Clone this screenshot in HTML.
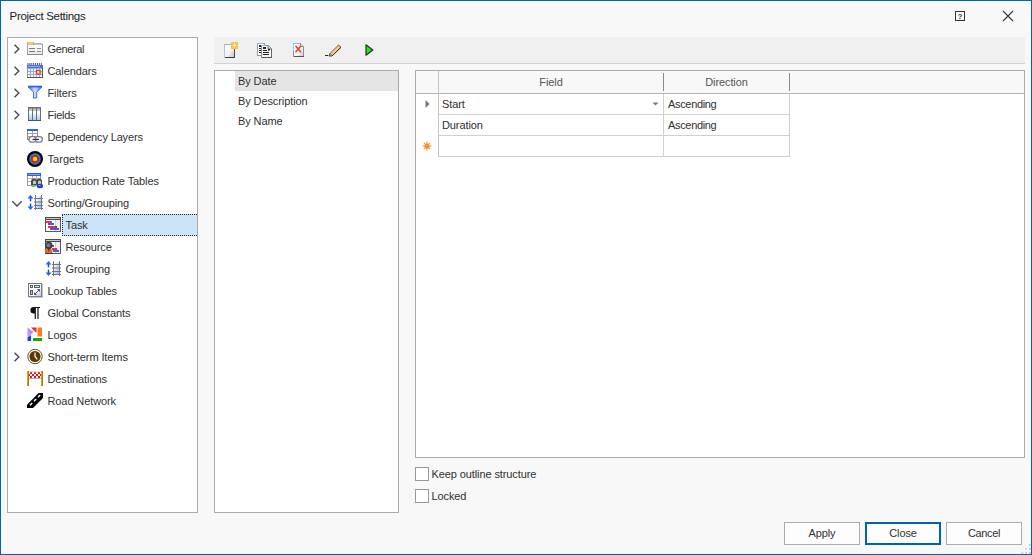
<!DOCTYPE html>
<html>
<head>
<meta charset="utf-8">
<title>Project Settings</title>
<style>
*{box-sizing:border-box;margin:0;padding:0}
html,body{width:1032px;height:555px;overflow:hidden;background:#f8f8f8}
body{font-family:"Liberation Sans",sans-serif;font-size:11px;letter-spacing:-0.1px;color:#303030;position:relative}
.win{position:absolute;left:0;top:0;width:1032px;height:555px;border:1px solid #0063b1;background:#f8f8f8}
.abs{position:absolute}
.title{position:absolute;left:9.600px;top:9px;font-size:11.500px;letter-spacing:-0.300px;line-height:14px;color:#222;white-space:nowrap}
.panel{position:absolute;background:#fff;border:1px solid #ababab}
.row{position:absolute;left:0;width:189px;height:22px;line-height:22px;white-space:nowrap}
.row .tx{position:absolute;top:0;color:#303030}
.row svg{position:absolute}
.sel{position:absolute;top:0;right:0;height:22px;background:#cce4f7;border:1px dotted #222;border-right:none}
.li{position:absolute;left:23px;line-height:20px;height:20px;color:#303030;white-space:nowrap}
.btn{position:absolute;top:522px;width:76px;height:23px;border:1px solid #adadad;background:#fdfdfd;text-align:center;line-height:21px;color:#303030}
.cb{position:absolute;width:14px;height:14px;border:1px solid #999;background:#fff}
.lbl{position:absolute;line-height:14px;color:#303030;white-space:nowrap}
.gl{position:absolute;background:#d0d0d0}
.gt{position:absolute;line-height:20px;color:#303030;white-space:nowrap}
</style>
</head>
<body>
<svg width="0" height="0" style="position:absolute"><defs><linearGradient id="gGen" x1="0" y1="0" x2="0" y2="1"><stop offset="0" stop-color="#ffffff"/><stop offset="1" stop-color="#e6e6e6"/></linearGradient><linearGradient id="gGenT" x1="0" y1="0" x2="0" y2="1"><stop offset="0" stop-color="#ffc04a"/><stop offset="1" stop-color="#ffe2a8"/></linearGradient><linearGradient id="gFil" x1="0" y1="0" x2="1" y2="0"><stop offset="0" stop-color="#3b6dff"/><stop offset="0.5" stop-color="#d6e2ff"/><stop offset="1" stop-color="#3b6dff"/></linearGradient><linearGradient id="gFld" x1="0" y1="0" x2="0" y2="1"><stop offset="0" stop-color="#ffffff"/><stop offset="0.400" stop-color="#fbfdff"/><stop offset="1" stop-color="#9cc8f5"/></linearGradient><linearGradient id="gSrt" x1="0" y1="0" x2="1" y2="1"><stop offset="0" stop-color="#ffffff"/><stop offset="1" stop-color="#8fc0f5"/></linearGradient><linearGradient id="gLk" x1="0" y1="0" x2="1" y2="1"><stop offset="0" stop-color="#ffffff"/><stop offset="0.6" stop-color="#f4f6fb"/><stop offset="1" stop-color="#a9c3f0"/></linearGradient><pattern id="pChk" x="2" y="1" width="4" height="4" patternUnits="userSpaceOnUse"><rect width="4" height="4" fill="#fff"/><rect x="1" width="2" height="2" fill="#ee1122"/><rect x="3" y="2" width="1" height="2" fill="#ee1122"/><rect x="0" y="2" width="1" height="2" fill="#ee1122"/></pattern><linearGradient id="gPg" x1="0" y1="0" x2="1" y2="1"><stop offset="0" stop-color="#ffffff"/><stop offset="0.55" stop-color="#f4f4f8"/><stop offset="1" stop-color="#b4b8c8"/></linearGradient><linearGradient id="gPd" x1="0" y1="0" x2="1" y2="1"><stop offset="0" stop-color="#ffffff"/><stop offset="0.600" stop-color="#f6f6f6"/><stop offset="1" stop-color="#c4c4c4"/></linearGradient></defs></svg>
<div class="win"></div>
<div class="title">Project Settings</div>

<!-- title buttons -->
<svg class="abs" style="left:955px;top:11px" width="10" height="10" viewBox="0 0 10 10"><rect x="0.5" y="0.5" width="9" height="9" fill="none" stroke="#333" stroke-width="1"/><text x="5" y="7.800" font-size="7.500" font-weight="bold" text-anchor="middle" font-family="Liberation Sans, sans-serif" fill="#333">?</text></svg>
<svg class="abs" style="left:1002px;top:10px" width="12" height="12" viewBox="0 0 12 12"><path d="M1 1L11 11M11 1L1 11" stroke="#333" stroke-width="1.100" fill="none"/></svg>

<!-- tree panel -->
<div class="panel" id="tree" style="left:7px;top:37px;width:191px;height:476px">
<div class="row" style="top:0px"><svg style="left:5px;top:5px" width="8" height="12" viewBox="0 0 8 12"><path d="M1.500 1.700L5.900 6L1.500 10.300" fill="none" stroke="#444" stroke-width="1.300"/></svg><svg style="left:19px;top:3px" width="16" height="16" viewBox="0 0 16 16"><rect x="0.5" y="3.5" width="15" height="10" fill="url(#gGen)" stroke="#a2a2a2"/><path d="M0.5 3.5V1.5H6.5V3.5" fill="url(#gGenT)" stroke="#c9a060" stroke-width="1"/><rect x="1" y="1" width="5" height="1.6" fill="#ffc45c"/><path d="M7.5 3.5V2.5H14.5V3.5" fill="#f4f4f4" stroke="#b0b0b0"/><rect x="2" y="7" width="6" height="1" fill="#7a7a7a"/><rect x="10" y="7" width="4" height="1" fill="#8e8e8e"/><rect x="2" y="10" width="6" height="1" fill="#7a7a7a"/><rect x="10" y="10" width="4" height="1" fill="#8e8e8e"/><rect x="0" y="13" width="16" height="1" fill="#8c8c8c"/></svg><span class="tx" style="left:39.5px;letter-spacing:-0.35px">General</span></div>
<div class="row" style="top:22px"><svg style="left:5px;top:5px" width="8" height="12" viewBox="0 0 8 12"><path d="M1.500 1.700L5.900 6L1.500 10.300" fill="none" stroke="#444" stroke-width="1.300"/></svg><svg style="left:19px;top:3px" width="16" height="16" viewBox="0 0 16 16"><rect x="0.5" y="2.5" width="15" height="12" fill="#f4f4f4" stroke="#9a9a9a"/><path d="M0.5 1H15.5" stroke="#222" stroke-width="1.6" stroke-dasharray="1 0.9"/><rect x="0" y="2" width="16" height="3" fill="#4570f0"/><rect x="1" y="3" width="12" height="1" fill="#8aa8ff"/><g fill="#93aaf0"><rect x="1" y="5" width="14" height="1"/><rect x="1" y="8" width="14" height="1"/><rect x="1" y="11" width="14" height="1"/><rect x="3" y="5" width="1" height="9"/><rect x="6" y="5" width="1" height="9"/><rect x="9" y="5" width="1" height="9"/><rect x="12" y="5" width="1" height="9"/></g><rect x="9.5" y="7.500" width="3.6" height="3.6" fill="#fff" stroke="#e2451a" stroke-width="1.4"/><rect x="0" y="14" width="16" height="1" fill="#555"/><rect x="15" y="5" width="1" height="10" fill="#555"/><rect x="0" y="5" width="1" height="9" fill="#999"/></svg><span class="tx" style="left:39.5px">Calendars</span></div>
<div class="row" style="top:44px"><svg style="left:5px;top:5px" width="8" height="12" viewBox="0 0 8 12"><path d="M1.500 1.700L5.900 6L1.500 10.300" fill="none" stroke="#444" stroke-width="1.300"/></svg><svg style="left:19px;top:3px" width="16" height="16" viewBox="0 0 16 16"><path d="M1.200 2H14.800L9.700 7.200V13H6.500V7.200Z" fill="url(#gFil)" stroke="#1f4ff0" stroke-width="0.8" stroke-linejoin="round"/><rect x="1" y="0.700" width="14" height="1.2" fill="#2458f5"/></svg><span class="tx" style="left:39.5px">Filters</span></div>
<div class="row" style="top:66px"><svg style="left:5px;top:5px" width="8" height="12" viewBox="0 0 8 12"><path d="M1.500 1.700L5.900 6L1.500 10.300" fill="none" stroke="#444" stroke-width="1.300"/></svg><svg style="left:19px;top:3px" width="16" height="16" viewBox="0 0 16 16"><rect x="1.5" y="0.5" width="12" height="13" fill="url(#gFld)" stroke="#6e6e6e"/><rect x="2" y="1" width="11" height="3" fill="#c4c4c4"/><rect x="2" y="1" width="11" height="1" fill="#9a9a9a"/><rect x="5" y="1" width="1" height="13" fill="#6e6e6e"/><rect x="9" y="1" width="1" height="13" fill="#6e6e6e"/><rect x="1" y="13" width="13" height="1" fill="#555"/></svg><span class="tx" style="left:39.5px;letter-spacing:-0.25px">Fields</span></div>
<div class="row" style="top:88px"><svg style="left:19px;top:3px" width="16" height="16" viewBox="0 0 16 16"><rect x="0.5" y="0.5" width="10" height="10" fill="#fff" stroke="#8e8e8e"/><rect x="0" y="0" width="11" height="2" fill="#3560ee"/><g fill="#a4a4a4"><rect x="1" y="4" width="9" height="1"/><rect x="1" y="7" width="9" height="1"/><rect x="5" y="2" width="1" height="8"/></g><rect x="2" y="7.600" width="7" height="5.600" rx="2.600" fill="#ffffff" stroke="#7b7f86" stroke-width="1.300"/><rect x="8.300" y="7.600" width="7" height="5.600" rx="2.600" fill="#ffffff" stroke="#7b7f86" stroke-width="1.300"/><rect x="5.500" y="9.800" width="6.500" height="1.300" fill="#1d3b66"/></svg><span class="tx" style="left:39.5px;letter-spacing:-0.15px">Dependency Layers</span></div>
<div class="row" style="top:110px"><svg style="left:19px;top:3px" width="16" height="16" viewBox="0 0 16 16"><circle cx="8" cy="8" r="8" fill="#000"/><circle cx="8" cy="8" r="5.800" fill="#1f7fe8"/><circle cx="8" cy="8" r="4" fill="#ee1111"/><circle cx="8" cy="8" r="2.200" fill="#ffee00"/></svg><span class="tx" style="left:39.5px;letter-spacing:0.05px">Targets</span></div>
<div class="row" style="top:132px"><svg style="left:19px;top:3px" width="16" height="16" viewBox="0 0 16 16"><rect x="0.5" y="0.5" width="13" height="12" fill="#fff" stroke="#9a9a9a"/><rect x="0" y="0" width="14" height="3" fill="#2f5df0"/><rect x="1" y="1" width="12" height="1" fill="#7f9cf5"/><g fill="#b5b5b5"><rect x="1" y="5" width="12" height="1"/><rect x="1" y="8" width="12" height="1"/><rect x="5" y="3" width="1" height="9"/><rect x="9" y="3" width="1" height="9"/></g><path d="M4 12V8.500Q4 5.500 7 5.500Q9 5.500 9.500 7Q10 5.500 12 5.500Q15 5.500 15 8.500V12Z" fill="#4a4a4a"/><path d="M6 11V9Q6 7.500 7.500 7.500T9 9V11Z M11 11V9Q11 7.500 12.500 7.500T14 9V11Z" fill="#c9c9c9"/><path d="M4 14L6.500 11.500L9 14Z" fill="#55d055"/><ellipse cx="13" cy="13" rx="3.200" ry="2.300" fill="#1e3fe0"/><rect x="11.500" y="12" width="2" height="1" fill="#9ab0ff"/></svg><span class="tx" style="left:39.5px">Production Rate Tables</span></div>
<div class="row" style="top:154px"><svg style="left:3px;top:8px" width="12" height="8" viewBox="0 0 12 8"><path d="M1.300 1.300L6 6L10.700 1.300" fill="none" stroke="#444" stroke-width="1.300"/></svg><svg style="left:19px;top:3px" width="16" height="16" viewBox="0 0 16 16"><path d="M3.500 0L6.500 3.500H4.200V6.200H2.800V3.500H0.500Z" fill="#2a62ff"/><path d="M3.500 15L6.500 11.500H4.200V8.800H2.800V11.500H0.500Z" fill="#2a62ff"/><rect x="2.900" y="3.500" width="1.200" height="2.700" fill="#0b5c8a"/><rect x="2.900" y="8.800" width="1.200" height="2.700" fill="#0b5c8a"/><rect x="9" y="1" width="5" height="13" fill="url(#gSrt)"/><g fill="#757575"><rect x="8" y="0" width="1" height="15"/><rect x="14" y="0" width="1" height="15"/><rect x="7" y="3" width="9" height="1"/><rect x="7" y="6.500" width="9" height="1"/><rect x="7" y="10" width="9" height="1"/><rect x="7" y="13" width="9" height="1"/></g></svg><span class="tx" style="left:39.5px">Sorting/Grouping</span></div>
<div class="row" style="top:176px"><svg style="left:37px;top:3px" width="16" height="16" viewBox="0 0 16 16"><rect x="0.5" y="0.5" width="15" height="14" fill="#fff" stroke="#5a5a5a"/><rect x="0" y="0" width="16" height="3" fill="#4a4a4a"/><rect x="1" y="1" width="14" height="1" fill="#c8c8c8"/><rect x="10" y="3" width="1" height="11" fill="#cfcfcf"/><rect x="11" y="3" width="4" height="11" fill="#f0f0f0"/><rect x="1" y="4" width="6" height="2" fill="#ff2a2a"/><rect x="3" y="6" width="6" height="2" fill="#2f63ff"/><rect x="3" y="9" width="9" height="2" fill="#ff2a2a"/><rect x="10" y="9" width="2" height="2" fill="#a04000"/><rect x="5" y="11" width="9" height="2" fill="#2f63ff"/></svg><div class="sel" style="left:53.5px"></div><span class="tx" style="left:57.5px">Task</span></div>
<div class="row" style="top:198px"><svg style="left:37px;top:3px" width="16" height="16" viewBox="0 0 16 16"><rect x="0.5" y="0.5" width="15" height="14" fill="#fff" stroke="#5a5a5a"/><rect x="0" y="0" width="16" height="3" fill="#4a4a4a"/><rect x="1" y="1" width="14" height="1" fill="#c8c8c8"/><rect x="10" y="3" width="1" height="11" fill="#cfcfcf"/><rect x="11" y="3" width="4" height="11" fill="#f0f0f0"/><rect x="7" y="6" width="2" height="2" fill="#2f63ff"/><rect x="7" y="9" width="5" height="2" fill="#ff2a2a"/><rect x="8" y="11" width="6" height="2" fill="#2f63ff"/><circle cx="3.800" cy="6.500" r="3.700" fill="#3c3c3c"/><circle cx="3.500" cy="6.200" r="2" fill="#7d7d7d"/><path d="M0 15V12Q0 10 2 10H5.500Q7.500 10 7.500 12V15Z" fill="#e8662a"/><path d="M3 10L3.800 13L4.600 10Z" fill="#333"/><rect x="0" y="14" width="8" height="1" fill="#3c3c3c"/></svg><span class="tx" style="left:57.5px">Resource</span></div>
<div class="row" style="top:220px"><svg style="left:37px;top:3px" width="16" height="16" viewBox="0 0 16 16"><path d="M3.500 0L6.500 3.500H4.200V6.200H2.800V3.500H0.500Z" fill="#2a62ff"/><path d="M3.500 15L6.500 11.500H4.200V8.800H2.800V11.500H0.500Z" fill="#2a62ff"/><rect x="2.900" y="3.500" width="1.200" height="2.700" fill="#0b5c8a"/><rect x="2.900" y="8.800" width="1.200" height="2.700" fill="#0b5c8a"/><rect x="9" y="1" width="5" height="13" fill="url(#gSrt)"/><g fill="#757575"><rect x="8" y="0" width="1" height="15"/><rect x="14" y="0" width="1" height="15"/><rect x="7" y="3" width="9" height="1"/><rect x="7" y="6.500" width="9" height="1"/><rect x="7" y="10" width="9" height="1"/><rect x="7" y="13" width="9" height="1"/></g></svg><span class="tx" style="left:57.5px">Grouping</span></div>
<div class="row" style="top:242px"><svg style="left:19px;top:3px" width="16" height="16" viewBox="0 0 16 16"><rect x="1.5" y="0.5" width="13" height="13" fill="url(#gLk)" stroke="#7a7a7a"/><rect x="2" y="13.500" width="13.500" height="1" fill="#8a8a8a"/><rect x="14.500" y="1" width="1" height="13" fill="#8a8a8a"/><rect x="3.500" y="2.500" width="2" height="2" fill="#e8f0ff" stroke="#505050" stroke-width="0.900"/><rect x="7.500" y="2.500" width="5" height="2" fill="#cfe0ff" stroke="#505050" stroke-width="0.900"/><rect x="3.500" y="7.500" width="2" height="4" fill="#9ec0ff" stroke="#505050" stroke-width="0.900"/><path d="M7.500 11.500L12.500 6.500M10.500 6.500H12.500V8.500M7.500 9.500V11.500H9.500" fill="none" stroke="#555" stroke-width="1"/></svg><span class="tx" style="left:39.5px">Lookup Tables</span></div>
<div class="row" style="top:264px"><svg style="left:19px;top:3px" width="16" height="16" viewBox="0 0 16 16"><path d="M6.800 2H13V3H11.600V14H10.400V3H8.900V14H7.700V8.500H6.800Q3.400 8.500 3.400 5.200Q3.400 2 6.800 2Z" fill="#111"/></svg><span class="tx" style="left:39.5px">Global Constants</span></div>
<div class="row" style="top:286px"><svg style="left:19px;top:3px" width="16" height="16" viewBox="0 0 16 16"><rect x="0.500" y="0" width="15" height="14" fill="#fff"/><path d="M0.500 0.500L6.500 5L0.500 10.500Z" fill="#b78cff"/><path d="M4 0.500H9.500V6Z" fill="#ff2222"/><rect x="10.500" y="0.500" width="4.500" height="9" fill="#ff7a1a"/><path d="M0.500 14V10.500L4 8V14Z" fill="#1f3ff0"/><rect x="6" y="11" width="9" height="3" fill="#12a812"/></svg><span class="tx" style="left:39.5px">Logos</span></div>
<div class="row" style="top:308px"><svg style="left:5px;top:5px" width="8" height="12" viewBox="0 0 8 12"><path d="M1.500 1.700L5.900 6L1.500 10.300" fill="none" stroke="#444" stroke-width="1.300"/></svg><svg style="left:19px;top:3px" width="16" height="16" viewBox="0 0 16 16"><circle cx="8" cy="7.500" r="7.200" fill="#fff" stroke="#5a3800" stroke-width="0.900"/><circle cx="8" cy="7.500" r="5.600" fill="#5a3800"/><path d="M8 3.500V7.500L10.300 10.300" fill="none" stroke="#fff" stroke-width="1.200"/></svg><span class="tx" style="left:39.5px">Short-term Items</span></div>
<div class="row" style="top:330px"><svg style="left:19px;top:3px" width="16" height="16" viewBox="0 0 16 16"><rect x="2" y="1" width="12" height="6" fill="url(#pChk)"/><rect x="2" y="0.500" width="12" height="0.800" fill="#bdbdbd"/><rect x="2" y="7" width="12" height="0.800" fill="#9a9a9a"/><rect x="0" y="0" width="2" height="15" fill="#b27a00"/><rect x="14" y="0" width="2" height="15" fill="#b27a00"/><rect x="0" y="0" width="1" height="15" fill="#d9a21a"/><rect x="14" y="0" width="1" height="15" fill="#d9a21a"/></svg><span class="tx" style="left:39.5px">Destinations</span></div>
<div class="row" style="top:352px"><svg style="left:19px;top:3px" width="16" height="16" viewBox="0 0 16 16"><path d="M0 15V11.700L11.600 0H16V5L6 15Z" fill="#000"/><path d="M3 12.200L5.200 10M7 8.200L9.200 6M11 4.200L13.200 2" stroke="#fff" stroke-width="1.400" fill="none"/></svg><span class="tx" style="left:39.5px">Road Network</span></div>
</div>

<!-- toolbar -->
<div class="abs" style="left:214px;top:37px;width:811px;height:26px;background:#f0f0f0"></div>
<div class="abs" style="left:214px;top:63px;width:811px;height:1px;background:#d2d2d2"></div>
<svg class="abs" style="left:223px;top:41px" width="18" height="18" viewBox="0 0 18 18"><rect x="1" y="3" width="11" height="14" fill="url(#gPg)"/><rect x="1" y="3" width="1" height="14" fill="#b9c6da"/><rect x="1" y="3" width="7" height="1" fill="#8fb8f0"/><rect x="1" y="3" width="1" height="8" fill="#a8c4ee"/><rect x="2" y="16" width="10" height="1" fill="#3c3c3c"/><rect x="11" y="8" width="1" height="9" fill="#4a4a4a"/><rect x="8" y="1" width="7" height="7" fill="#ffb83a"/><path d="M11.500 1V8M8 4.500H15" stroke="#ffd98a" stroke-width="0.800"/><path d="M8.500 1.500L14.500 7.500M14.500 1.500L8.500 7.500" stroke="#ffd98a" stroke-width="0.700"/><circle cx="11.500" cy="4.500" r="1.300" fill="#fff3c8"/></svg>
<svg class="abs" style="left:257px;top:41px" width="18" height="18" viewBox="0 0 18 18"><rect x="0.500" y="2.500" width="7" height="12" fill="#fdfdfd" stroke="#9a9a9a"/><rect x="0" y="2" width="6" height="1" fill="#8fb8f0"/><g fill="#222"><rect x="2" y="4" width="2" height="2"/><rect x="2" y="7" width="3" height="1"/><rect x="2" y="9" width="3" height="1"/><rect x="2" y="11" width="3" height="1"/></g><path d="M4.500 4.500H11.500L14.500 7.500V16.500H4.500Z" fill="#fafafa" stroke="#8a8a8a"/><rect x="4" y="4" width="5" height="1" fill="#8fb8f0"/><path d="M11 4.500V8H14.500" fill="#d8d8d8" stroke="#555" stroke-width="0.800"/><g fill="#222"><rect x="6" y="6" width="3" height="2"/><rect x="6" y="9" width="4" height="1"/><rect x="6" y="11" width="6" height="1"/><rect x="6" y="13" width="6" height="1"/><rect x="11" y="8" width="2" height="1.500"/></g><rect x="5" y="16" width="10" height="1" fill="#555"/><rect x="14" y="8" width="1" height="9" fill="#666"/></svg>
<svg class="abs" style="left:293px;top:43px" width="18" height="18" viewBox="0 0 18 18"><path d="M0.500 0.500H7.500L10.500 3.500V13.500H0.500Z" fill="url(#gPd)" stroke="#8e8e8e"/><rect x="0" y="0" width="7" height="1" fill="#8fb8f0"/><rect x="0" y="0" width="1" height="8" fill="#a8c4ee"/><path d="M7.500 0.500V3.500H10.500" fill="#e4e4e4" stroke="#777" stroke-width="0.800"/><path d="M2.500 2.800L8 9.200M8 2.800L2.500 9.200" stroke="#f03a18" stroke-width="1.500"/><rect x="1" y="13" width="10" height="1" fill="#555"/></svg>
<svg class="abs" style="left:325px;top:44px" width="18" height="18" viewBox="0 0 18 18"><rect x="0" y="11" width="3" height="1" fill="#222"/><path d="M4 12L5 9.500L13.500 1L16 3.200L7 12Z" fill="#f9cc82" stroke="#444" stroke-width="0.800" stroke-linejoin="round"/><path d="M13 1.500L15.500 3.800L16 3.200L13.500 1Z" fill="#e0673a"/><path d="M6.800 12.200L16 3.300" stroke="#2a2a2a" stroke-width="0.900" fill="none"/><path d="M4 12L5 9.500L6.500 11Z" fill="#f4e6c8" stroke="#333" stroke-width="0.600"/></svg>
<svg class="abs" style="left:365px;top:44px" width="18" height="18" viewBox="0 0 18 18"><path d="M1 0.800L7.800 6L1 11.200Z" fill="#2ae02a" stroke="#1a3a1a" stroke-width="1.200" stroke-linejoin="round"/></svg>

<!-- list panel -->
<div class="panel" style="left:214px;top:70px;width:185px;height:443px">
  <div class="abs" style="left:20px;top:0;width:163px;height:20px;background:#e5e5e5"></div>
  <div class="li" style="top:0">By Date</div>
  <div class="li" style="top:20px">By Description</div>
  <div class="li" style="top:40px">By Name</div>
</div>

<!-- grid panel -->
<div class="panel" style="left:415px;top:70px;width:610px;height:388px">
  <div class="abs" style="left:0;top:0;width:608px;height:22px;background:#f8f8f8"></div>
  <div class="gl" style="left:0;top:22px;width:608px;height:1px;background:#b4b4b4"></div>
  <div class="gl" style="left:22px;top:0;width:1px;height:86px;background:#c4c4c4"></div>
  <div class="gl" style="left:247px;top:2px;width:1px;height:18px;background:#8a8a8a"></div>
  <div class="gl" style="left:373px;top:2px;width:1px;height:18px;background:#8a8a8a"></div>
  <div class="gl" style="left:247px;top:23px;width:1px;height:63px"></div>
  <div class="gl" style="left:373px;top:23px;width:1px;height:63px"></div>
  <div class="gl" style="left:23px;top:43px;width:351px;height:1px"></div>
  <div class="gl" style="left:23px;top:64px;width:351px;height:1px"></div>
  <div class="gl" style="left:23px;top:85px;width:351px;height:1px"></div>
  <div class="gt" style="left:23px;top:1px;width:224px;text-align:center;color:#555">Field</div>
  <div class="gt" style="left:248px;top:1px;width:125px;text-align:center;color:#555">Direction</div>
  <div class="gt" style="left:26px;top:23px">Start</div>
  <div class="gt" style="left:252px;top:23px;letter-spacing:-0.330px">Ascending</div>
  <div class="gt" style="left:26px;top:44px">Duration</div>
  <div class="gt" style="left:252px;top:44px;letter-spacing:-0.330px">Ascending</div>
  <svg class="abs" style="left:9px;top:28px" width="6" height="10" viewBox="0 0 6 10"><path d="M0.500 1L4.500 5L0.500 9Z" fill="#777"/></svg>
  <svg class="abs" style="left:236px;top:31px" width="8" height="5" viewBox="0 0 8 5"><path d="M0.500 0.500H6.500L3.500 3.500Z" fill="#777"/></svg>
  <svg class="abs" style="left:6px;top:70px" width="10" height="10" viewBox="0 0 10 10"><path d="M5 0.600V9.400M0.600 5H9.400M1.900 1.900L8.100 8.100M8.100 1.900L1.900 8.100" stroke="#f8923a" stroke-width="1.100"/><circle cx="5" cy="5" r="2.600" fill="#f88f30"/></svg>
</div>

<!-- checkboxes -->
<div class="cb" style="left:415px;top:467px"></div>
<div class="lbl" style="left:431.500px;top:467px">Keep outline structure</div>
<div class="cb" style="left:415px;top:489px"></div>
<div class="lbl" style="left:431.500px;top:489px">Locked</div>

<!-- buttons -->
<div class="btn" style="left:784px">Apply</div>
<div class="btn" style="left:865px;border:2px solid #0063b1;line-height:19px">Close</div>
<div class="btn" style="left:946px;letter-spacing:-0.350px">Cancel</div>

<!-- resize grip -->
<svg class="abs" style="left:1021px;top:544px" width="10" height="10" viewBox="0 0 10 10"><g fill="#c4c4c4"><rect x="8" y="8" width="1.700" height="1.700"/><rect x="8" y="4" width="1.700" height="1.700"/><rect x="4.200" y="8" width="1.700" height="1.700"/><rect x="8" y="0" width="1.700" height="1.700"/><rect x="4.200" y="4" width="1.700" height="1.700"/><rect x="0.500" y="8" width="1.700" height="1.700"/></g></svg>
</body>
</html>
